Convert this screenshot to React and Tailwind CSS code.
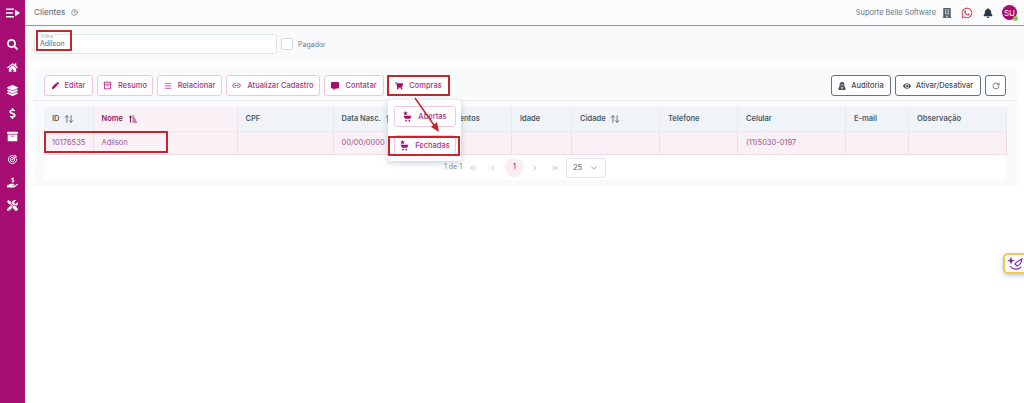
import React from "react";
import { CircleHelp, Menu, Link2, RotateCw, ChevronsLeft, ChevronLeft, ChevronRight, ChevronsRight, ChevronDown, ArrowUpDown } from "lucide-react";
import { FaWhatsapp, FaBuilding, FaBell, FaPen, FaCommentAlt, FaShoppingCart, FaUserSecret, FaEye, FaHome, FaLayerGroup, FaDollarSign, FaArchive, FaTools, FaSearch, FaHandHoldingUsd, FaSortAmountUpAlt } from "react-icons/fa";
import { TbTargetArrow } from "react-icons/tb";
import { MdOutlineInventory2 } from "react-icons/md";

function MenuOpen() {
  return (
    <svg width="14" height="10" viewBox="0 0 14 10" className="mt-[8px]" fill="white">
      <rect x="0" y="0.5" width="8" height="1.5" />
      <rect x="0" y="4.2" width="7" height="1.5" />
      <rect x="0" y="8" width="8" height="1.5" />
      <path d="M9 1.5 L14 5 L9 8.5 Z" />
    </svg>
  );
}
function CartStar({ className }) {
  return (
    <svg width="10" height="11" viewBox="0 0 10 11" className={className} fill="currentColor">
      <path d="M3.5 0 l.7 1.4 1.5.2 -1.1 1.1 .3 1.5 -1.4-.7 -1.4.7 .3-1.5 -1.1-1.1 1.5-.2 Z" />
      <path d="M1.5 4.8 h7.8 l-1 3 h-5.2 Z" />
      <circle cx="4" cy="9.6" r=".9" />
      <circle cx="7.3" cy="9.6" r=".9" />
    </svg>
  );
}

const side = [FaSearch, FaHome, FaLayerGroup, FaDollarSign, FaArchive, TbTargetArrow, FaHandHoldingUsd, FaTools];

function Btn({ icon: I, children, w, size = 8 }) {
  return (
    <button className={`h-[21px] shrink-0 whitespace-nowrap rounded-[3px] border border-[#efc6df] bg-white flex items-center justify-center gap-[6px] text-[7.5px] font-medium text-[#a8327f] ${w}`}>
      <I size={size} className="text-[#a50d73]" />
      {children}
    </button>
  );
}
function Btn2({ icon: I, children, w, size = 8 }) {
  return (
    <button className={`h-[21px] shrink-0 whitespace-nowrap rounded-[3px] border border-[#66747f] bg-white flex items-center justify-center gap-[5px] text-[7.5px] font-medium text-[#3f4d58] ${w}`}>
      <I size={size} />
      {children}
    </button>
  );
}

const cols = [
  ["ID", 49, "sort"], ["Nome", 144, "active"], ["CPF", 96], ["Data Nasc.", 85, "sort"], ["Apontamentos", 93.5], ["Idade", 60], ["Cidade", 88, "sort"], ["Telefone", 78], ["Celular", 108], ["E-mail", 63], ["Observação", 97.5],
];
const cells = ["10176535", "Adilson", "", "00/00/0000", "", "", "", "", "(11)5030-0197", "", ""];

function Red({ className }) {
  return <div className={`absolute border-2 border-[#c8242b] pointer-events-none ${className}`} />;
}

export default function App() {
  return (
    <div className="relative flex h-[403px] w-[1024px] overflow-hidden bg-white font-['Inter',sans-serif]">
      <aside className="w-[25px] shrink-0 bg-[#a50d73] flex flex-col items-center text-white">
        <MenuOpen />
        <div className="mt-[21px] flex flex-col items-center gap-[12px]">
          {side.map((I, i) => <I key={i} size={11} />)}
        </div>
      </aside>
      <main className="flex-1 min-w-0">
        <header className="h-[26px] border-b border-[#5aa9ec] bg-[#fafbfd] flex items-center pl-[9px] pr-[7px]">
          <span className="text-[8.2px] text-[#56646f]">Clientes</span>
          <CircleHelp size={7} className="ml-[6px] text-[#56646f]" />
          <span className="ml-auto text-[7.4px] text-[#6b7883]">Suporte Belle Software</span>
          <FaBuilding size={10} className="ml-[6px] text-[#52606b]" />
          <FaWhatsapp size={12} className="ml-[9px] text-[#d6303f]" />
          <FaBell size={10} className="ml-[10px] text-[#263947]" />
          <div className="relative ml-[9px] h-[15px] w-[15px] rounded-full bg-[#a50d73] text-white text-[8px] flex items-center justify-center">
            SU
            <span className="absolute -bottom-[1px] -right-[1px] h-[5px] w-[5px] rounded-full bg-[#7ec850]" />
          </div>
        </header>
        <section className="h-[34px] bg-[#f8fafc] pl-[9px] pt-[8px] flex items-start">
          <div className="relative h-[20px] w-[243px] rounded-[3px] border border-[#dfe5ea] bg-white pl-[5px] flex items-center text-[7px] text-[#56646f]">
            Adilson
            <span className="absolute -top-[2px] left-[5px] bg-white px-[1px] text-[5px] leading-[6px] text-[#9aa5ae]">Filtro</span>
          </div>
          <div className="ml-[4px] mt-[4px] h-[12px] w-[12px] rounded-[2px] border border-[#d5dce2] bg-white" />
          <span className="ml-[5px] mt-[5px] text-[7px] leading-[11px] text-[#6b7883]">Pagador</span>
        </section>
        <section className="mt-[8px] ml-[8px] w-[984px] h-[118px] bg-[#f8fafc]">
          <div className="h-[33px] border-b border-[#e9eef2] pt-[7px] pl-[11px] pr-[11px] flex gap-[4px]">
            <Btn icon={FaPen} size={7} w="w-[49px]">Editar</Btn>
            <Btn icon={MdOutlineInventory2} size={9} w="w-[56px]">Resumo</Btn>
            <Btn icon={Menu} w="w-[65px]">Relacionar</Btn>
            <Btn icon={Link2} size={9} w="w-[94px]">Atualizar Cadastro</Btn>
            <Btn icon={FaCommentAlt} w="w-[60px]">Contatar</Btn>
            <Btn icon={FaShoppingCart} w="w-[61px]">Compras</Btn>
            <div className="ml-auto flex gap-[4px]">
              <Btn2 icon={FaUserSecret} w="w-[60px]">Auditoria</Btn2>
              <Btn2 icon={FaEye} w="w-[86px]">Ativar/Desativar</Btn2>
              <Btn2 icon={RotateCw} w="w-[21px]" />
            </div>
          </div>
          <div className="mx-[11px] mt-[6px] h-[73px] w-[962px] bg-white relative">
            <table className="w-full table-fixed border-collapse text-[7.5px]">
              <colgroup>{cols.map((c) => <col key={c[0]} style={{ width: c[1] }} />)}</colgroup>
              <thead>
                <tr className="h-[24px]">
                  {cols.map(([t, , s]) => (
                    <th key={t} className={`whitespace-nowrap border-r border-b border-[#e6ebf0] pl-[8px] text-left font-semibold ${s === "active" ? "bg-[#faf1f6] text-[#8c1562]" : "bg-[#f0f4f8] text-[#4d5b66]"}`}>
                      <span className="inline-flex items-center gap-[4px]">
                        {t}
                        {s === "sort" && <ArrowUpDown size={10} />}
                        {s === "active" && <FaSortAmountUpAlt size={8} className="ml-[2px]" />}
                      </span>
                    </th>
                  ))}
                </tr>
              </thead>
              <tbody>
                <tr className="h-[23px] bg-[#f9f1f6]">
                  {cells.map((c, i) => (
                    <td key={i} className="border-r border-b border-[#f0dbe7] pl-[8px] text-[#a0558a]">{c}</td>
                  ))}
                </tr>
              </tbody>
            </table>
            <div className="mt-[3px] flex items-center text-[#9aa5ae] text-[7px]">
              <span className="ml-[400px] w-[21px] text-[#7d8a94]">1 de 1</span>
              <ChevronsLeft size={8} className="ml-[4px]" />
              <ChevronLeft size={8} className="ml-[12px]" />
              <span className="ml-[8px] h-[19px] w-[19px] rounded-full bg-[#f9eef5] text-[#a5277a] flex items-center justify-center font-medium">1</span>
              <ChevronRight size={8} className="ml-[7px]" />
              <ChevronsRight size={8} className="ml-[12px]" />
              <div className="ml-[7px] h-[20px] w-[40px] rounded-[3px] border border-[#dfe5ea] bg-white flex items-center justify-between px-[6px] text-[#56646f] text-[7.5px]">
                25
                <ChevronDown size={10} className="text-[#8a96a0]" />
              </div>
            </div>
          </div>
        </section>
      </main>

      <div className="absolute left-[388px] top-[100px] h-[61px] w-[73px] rounded-[3px] bg-white shadow-[0_2px_6px_rgba(90,100,120,0.3)] flex flex-col items-center pt-[6px] gap-[8px]">
        <Btn icon={CartStar} w="w-[62px]">Abertas</Btn>
        <Btn icon={CartStar} w="w-[62px]">Fechadas</Btn>
      </div>

      <Red className="left-[36px] top-[30px] h-[21px] w-[36px]" />
      <Red className="left-[44px] top-[131px] h-[22px] w-[124px]" />
      <Red className="left-[387px] top-[75px] h-[21px] w-[63px]" />
      <Red className="left-[388px] top-[136px] h-[20px] w-[72px]" />
      <svg className="absolute left-[410px] top-[94px]" width="36" height="44" viewBox="0 0 36 44">
        <path d="M5 4 L26 34" stroke="#c8242b" strokeWidth="1.5" fill="none" />
        <path d="M29 38 L21 33 L27 28 Z" fill="#c8242b" />
      </svg>

      <div className="absolute left-[1003px] top-[253px] h-[21px] w-[30px] rounded-[5px] border-2 border-[#f2c94c] border-r-[#e86a8a] bg-white shadow-[0_2px_4px_rgba(90,100,160,0.35)] pl-[2px] flex items-center">
        <svg width="16" height="14" viewBox="0 0 16 14" fill="none" stroke="#7b2f9e" strokeWidth="1.2">
          <path d="M4 1.5 l.6 1.6 1.6.6 -1.6.6 -.6 1.6 -.6-1.6 -1.6-.6 1.6-.6 Z" fill="#7b2f9e" />
          <path d="M8 7 C10 4 13 3 15 2 C14.5 5 13 8 10 9 Z" />
          <path d="M3 9 C6 13 11 13 14 10" />
        </svg>
      </div>
    </div>
  );
}
